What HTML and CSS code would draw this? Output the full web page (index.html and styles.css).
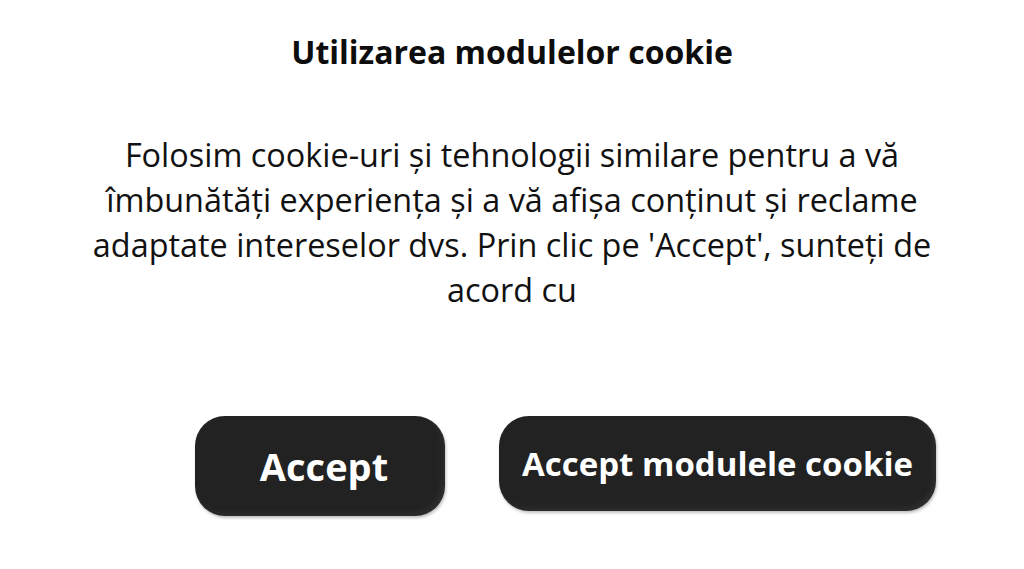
FILE: index.html
```html
<!DOCTYPE html>
<html lang="ro">
<head>
<meta charset="utf-8">
<link rel="stylesheet" href="styles.css">
</head>
<body>
<div class="dialog">
  <h1 class="title">Utilizarea modulelor cookie</h1>
  <p class="text">Folosim cookie-uri și tehnologii similare pentru a vă îmbunătăți experiența și a vă afișa conținut și reclame adaptate intereselor dvs. Prin clic pe 'Accept', sunteți de acord cu</p>
  <div class="actions">
    <button class="btn btn-accept">Accept</button>
    <button class="btn btn-all">Accept modulele cookie</button>
  </div>
</div>
</body>
</html>
```

FILE: styles.css
```css
html, body {
  margin: 0;
  padding: 0;
  background: #ffffff;
}
body {
  width: 1024px;
  height: 569px;
  overflow: hidden;
  font-family: "Open Sans", "Noto Sans", sans-serif;
  color: #111;
}
.dialog {
  display: flex;
  flex-direction: column;
  align-items: center;
  padding-top: 30px;
}
.title {
  margin: 0;
  font-size: 32px;
  font-weight: 700;
  line-height: 44px;
  color: #0d0d0d;
}
.text {
  margin: 58px 0 0;
  width: 870px;
  text-align: center;
  font-size: 32.4px;
  line-height: 45px;
  font-weight: 400;
  color: #111;
}
.actions {
  align-self: stretch;
  display: flex;
  align-items: flex-start;
  gap: 54px;
  padding-left: 195px;
  margin-top: 104px;
}
.btn {
  border: none;
  background: #222222;
  color: #ffffff;
  font-family: "Open Sans", "Noto Sans", sans-serif;
  font-weight: 700;
  border-radius: 30px;
  box-shadow: inset -3px -3px 6px rgba(255,255,255,0.06), 1px 2px 3px rgba(0,0,0,0.25);
  padding: 0;
}
.btn-accept {
  width: 250px;
  height: 100px;
  font-size: 38px;
  padding-left: 8px;
}
.btn-all {
  width: 437px;
  height: 95px;
  font-size: 33px;
}
```
